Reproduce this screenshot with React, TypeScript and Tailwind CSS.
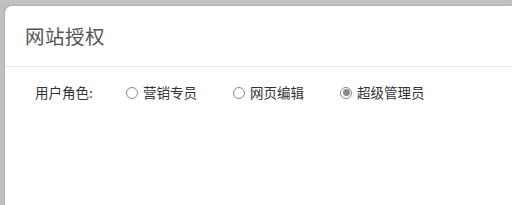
import React from "react";

function Radio({ checked, label }: { checked?: boolean; label: string }) {
  return (
    <label className="flex items-center gap-[5px]">
      <span className="w-[12px] h-[12px] rounded-full border border-[#8a8a8a] bg-white flex items-center justify-center">
        {checked && <span className="w-[7px] h-[7px] rounded-full bg-[#8a8a8a]" />}
      </span>
      <span>{label}</span>
    </label>
  );
}

export default function App() {
  return (
    <div
      className="w-[512px] h-[205px] bg-[#c0c0c0] pt-[6px] pl-[5px] flex overflow-hidden"
      style={{ fontFamily: '"Noto Sans CJK SC", "Noto Sans", sans-serif' }}
    >
      <div className="flex-1 bg-white rounded-tl-[7px] shadow-[-1px_-1px_2px_rgba(0,0,0,0.08)] flex flex-col">
        <div className="h-[61px] border-b border-[#e8e8e8] flex items-center pl-[20px]">
          <span className="text-[19.5px] text-[#555] tracking-[0.5px]">网站授权</span>
        </div>
        <div className="flex items-center h-[51px] pl-[30px] text-[13.5px] text-[#333]">
          <span className="w-[91px]">用户角色:</span>
          <div className="flex items-center gap-[36px]">
            <Radio label="营销专员" />
            <Radio label="网页编辑" />
            <Radio checked label="超级管理员" />
          </div>
        </div>
      </div>
    </div>
  );
}
